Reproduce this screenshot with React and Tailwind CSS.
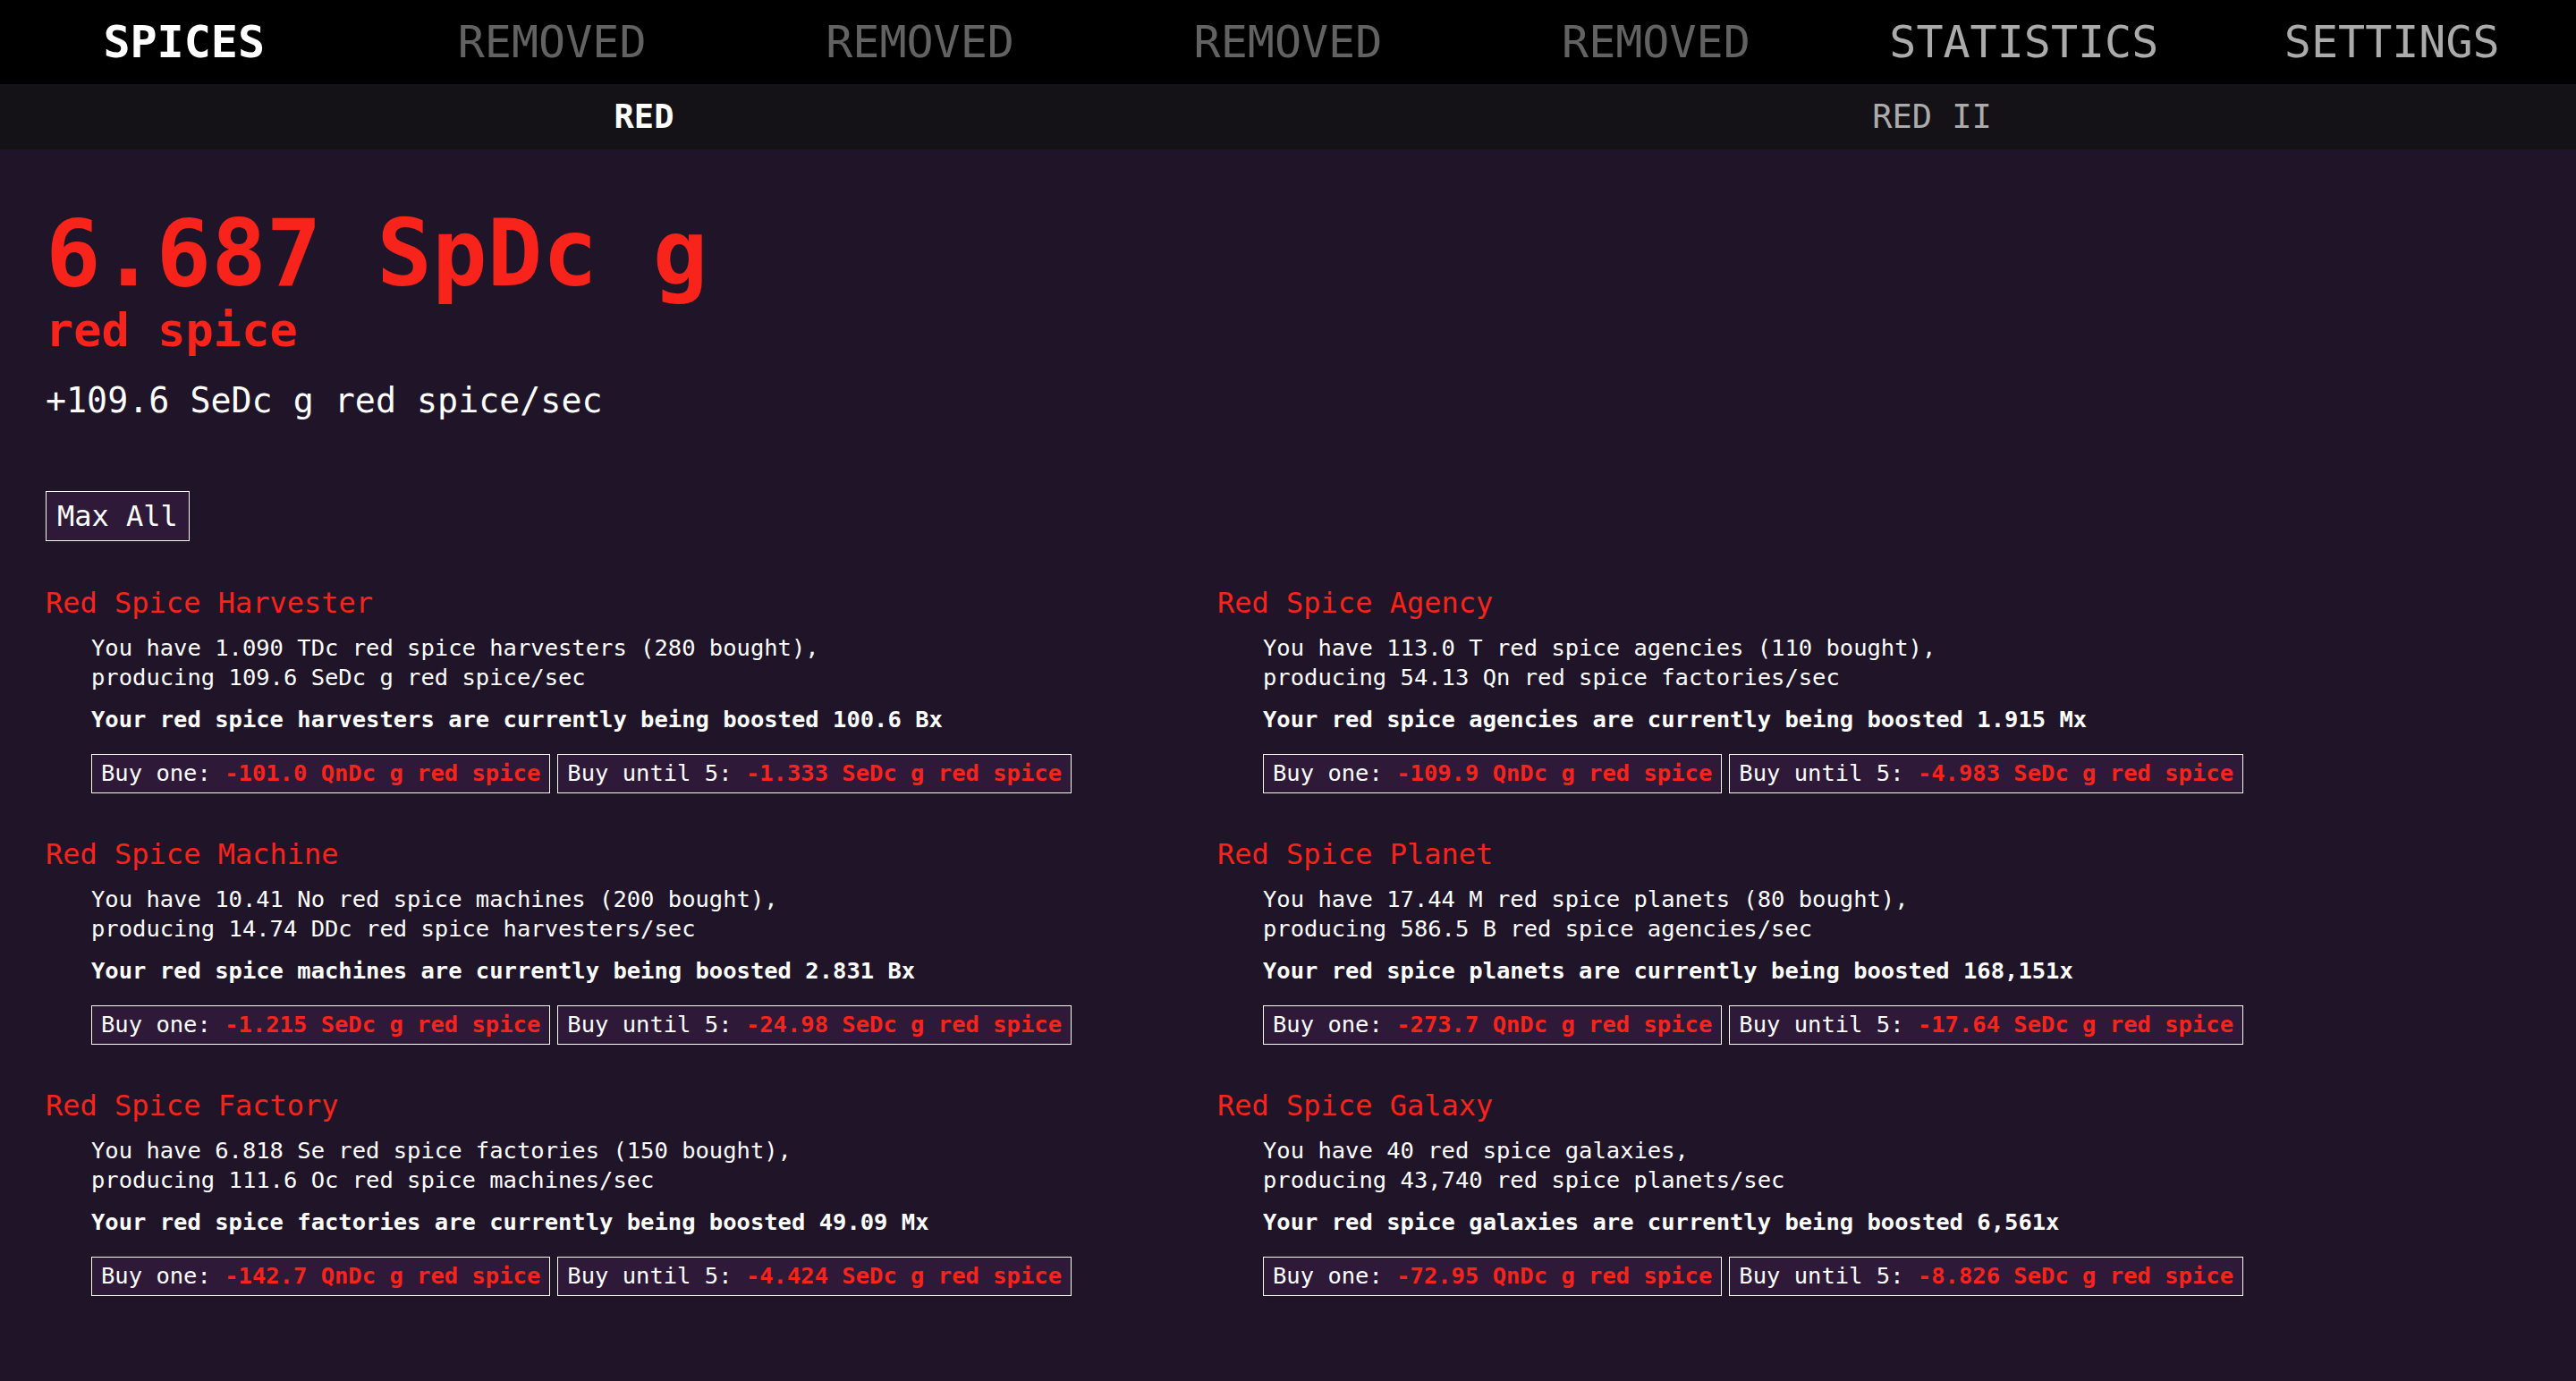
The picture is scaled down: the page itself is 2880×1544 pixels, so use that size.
import React from "react";

const FONT = { fontFamily: '"DejaVu Sans Mono", "Liberation Mono", monospace' };

const left = [
  {
    title: "Red Spice Harvester",
    l1: "You have 1.090 TDc red spice harvesters (280 bought),",
    l2: "producing 109.6 SeDc g red spice/sec",
    boost: "Your red spice harvesters are currently being boosted 100.6 Bx",
    one: "-101.0 QnDc g red spice",
    five: "-1.333 SeDc g red spice",
  },
  {
    title: "Red Spice Machine",
    l1: "You have 10.41 No red spice machines (200 bought),",
    l2: "producing 14.74 DDc red spice harvesters/sec",
    boost: "Your red spice machines are currently being boosted 2.831 Bx",
    one: "-1.215 SeDc g red spice",
    five: "-24.98 SeDc g red spice",
  },
  {
    title: "Red Spice Factory",
    l1: "You have 6.818 Se red spice factories (150 bought),",
    l2: "producing 111.6 Oc red spice machines/sec",
    boost: "Your red spice factories are currently being boosted 49.09 Mx",
    one: "-142.7 QnDc g red spice",
    five: "-4.424 SeDc g red spice",
  },
];

const right = [
  {
    title: "Red Spice Agency",
    l1: "You have 113.0 T red spice agencies (110 bought),",
    l2: "producing 54.13 Qn red spice factories/sec",
    boost: "Your red spice agencies are currently being boosted 1.915 Mx",
    one: "-109.9 QnDc g red spice",
    five: "-4.983 SeDc g red spice",
  },
  {
    title: "Red Spice Planet",
    l1: "You have 17.44 M red spice planets (80 bought),",
    l2: "producing 586.5 B red spice agencies/sec",
    boost: "Your red spice planets are currently being boosted 168,151x",
    one: "-273.7 QnDc g red spice",
    five: "-17.64 SeDc g red spice",
  },
  {
    title: "Red Spice Galaxy",
    l1: "You have 40 red spice galaxies,",
    l2: "producing 43,740 red spice planets/sec",
    boost: "Your red spice galaxies are currently being boosted 6,561x",
    one: "-72.95 QnDc g red spice",
    five: "-8.826 SeDc g red spice",
  },
];

function Generator({ g, first }) {
  return (
    <div className={first ? "" : "mt-[52px]"}>
      <div className="text-[32px] leading-none text-[#f8231a] whitespace-pre">{g.title}</div>
      <div className="mt-[18px] ml-[51px] text-[25.5px] leading-[33px] text-white whitespace-pre">
        <div>{g.l1}</div>
        <div>{g.l2}</div>
      </div>
      <div className="mt-[14px] ml-[51px] text-[25.5px] leading-[33px] font-bold text-white whitespace-pre">
        {g.boost}
      </div>
      <div className="mt-[22px] ml-[51px] flex gap-2">
        <button className="h-[44px] px-[10px] border border-white bg-[#2e1a38] text-[25.5px] leading-none text-white whitespace-pre" style={FONT}>
          Buy one: <span className="font-bold text-[#f8231a]">{g.one}</span>
        </button>
        <button className="h-[44px] px-[10px] border border-white bg-[#2e1a38] text-[25.5px] leading-none text-white whitespace-pre" style={FONT}>
          Buy until 5: <span className="font-bold text-[#f8231a]">{g.five}</span>
        </button>
      </div>
    </div>
  );
}

export default function App() {
  const tabs = [
    { t: "SPICES", c: "text-white font-bold" },
    { t: "REMOVED", c: "text-[#626262]" },
    { t: "REMOVED", c: "text-[#626262]" },
    { t: "REMOVED", c: "text-[#626262]" },
    { t: "REMOVED", c: "text-[#626262]" },
    { t: "STATISTICS", c: "text-[#ababab]" },
    { t: "SETTINGS", c: "text-[#ababab]" },
  ];
  return (
    <div className="min-h-screen bg-[#201528]" style={FONT}>
      <nav className="flex h-[94px] bg-black">
        {tabs.map((x, i) => (
          <div key={i} className={`flex-1 flex items-center justify-center text-[50px] leading-none ${x.c}`}>
            {x.t}
          </div>
        ))}
      </nav>
      <nav className="flex h-[73px] bg-[#141217]">
        <div className="flex-1 flex items-center justify-center text-[37px] leading-none font-bold text-white">RED</div>
        <div className="flex-1 flex items-center justify-center text-[37px] leading-none text-[#ababab]">RED II</div>
      </nav>
      <main className="pl-[51px] pt-[66px] pb-[40px]">
        <div className="text-[102.5px] leading-none font-bold text-[#f8231a] whitespace-pre">6.687 SpDc g</div>
        <div className="mt-[7px] text-[52px] leading-none font-bold text-[#f8231a]">red spice</div>
        <div className="mt-[34px] text-[38.3px] leading-none text-white whitespace-pre">+109.6 SeDc g red spice/sec</div>
        <button className="mt-[82px] h-[56px] px-3 border border-white bg-[#2e1a38] text-[32px] leading-none text-white" style={FONT}>
          Max All
        </button>
        <div className="mt-[53px] grid grid-cols-[1310px_1fr]">
          <div className="flex flex-col">
            {left.map((g, i) => (
              <Generator key={i} g={g} first={i === 0} />
            ))}
          </div>
          <div className="flex flex-col">
            {right.map((g, i) => (
              <Generator key={i} g={g} first={i === 0} />
            ))}
          </div>
        </div>
      </main>
    </div>
  );
}
